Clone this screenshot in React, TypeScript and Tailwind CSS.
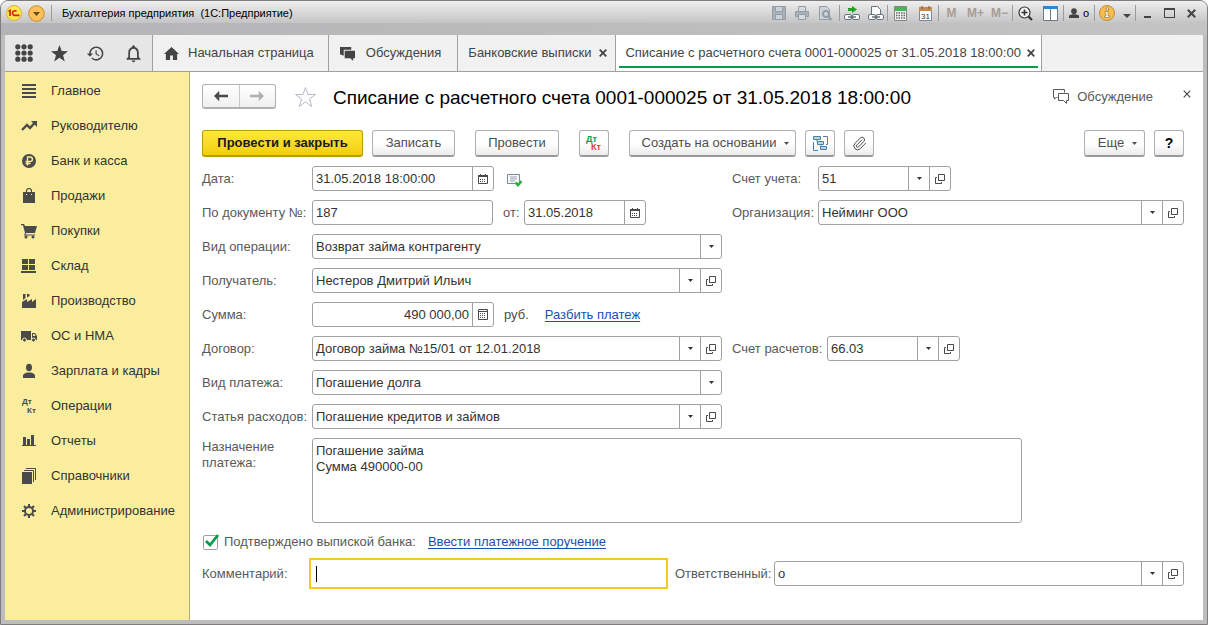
import { useId, useState } from 'react'
import type { ReactNode } from 'react'
import { Paperclip } from 'lucide-react'
import { MdHistory, MdNotificationsNone } from 'react-icons/md'

const sections: { label: string; icon: ReactNode }[] = [
  { label: 'Главное', icon: <path d="M1 1h14v2H1zM1 5h14v2H1zM1 9h14v2H1zM1 13h14v2H1z" /> },
  {
    label: 'Руководителю',
    icon: (
      <>
        <path d="M1 12l5-5 3 3 4.5-5" fill="none" stroke="currentColor" strokeWidth="2.4" />
        <path d="M10 3h6v6z" />
      </>
    ),
  },
  {
    label: 'Банк и касса',
    icon: (
      <>
        <circle cx="8" cy="8" r="7" />
        <path d="M6.5 12.5V4h2.7a2.2 2.2 0 0 1 0 4.5H4.5M4.5 10.5h5" fill="none" stroke="#fbed9e" strokeWidth="1.4" />
      </>
    ),
  },
  {
    label: 'Продажи',
    icon: (
      <>
        <path d="M2 4h3v3h1V4h4v3h1V4h3v11H2z" />
        <path d="M5.5 6V3a2.5 2.5 0 0 1 5 0v3" fill="none" stroke="currentColor" strokeWidth="1.2" />
      </>
    ),
  },
  {
    label: 'Покупки',
    icon: (
      <>
        <path d="M0 1h3l1 2h12l-2 7H5l-.5 1.500H14v1H3l1-2.500L2 2.200H0z" />
        <circle cx="5" cy="14" r="1.5" />
        <circle cx="12" cy="14" r="1.5" />
      </>
    ),
  },
  { label: 'Склад', icon: <path d="M1 1h6v5H1zM8 1h6v5H8zM1 7h6v5H1zM8 7h6v5H8zM0 13h15v2H0z" /> },
  { label: 'Производство', icon: <path d="M1 15V9l5-3v3l5-3v3l4-3v9zM2 1h2.500v4L2 7zM6 1h2.500v2L6 4.500z" /> },
  {
    label: 'ОС и НМА',
    icon: (
      <>
        <path d="M0 3h10v9H0zM11 5h3l2 3v4h-5z" />
        <path d="M12 6h1.500l1.200 2H12z" fill="#fbed9e" />
        <circle cx="3.5" cy="12" r="2" stroke="#fbed9e" />
        <circle cx="12.5" cy="12" r="2" stroke="#fbed9e" />
      </>
    ),
  },
  {
    label: 'Зарплата и кадры',
    icon: (
      <>
        <ellipse cx="8" cy="4.5" rx="3" ry="3.7" />
        <path d="M2 15v-2.500C2 11 4 10 6 9.500h4c2 .5 4 1.500 4 3V15z" />
      </>
    ),
  },
  {
    label: 'Операции',
    icon: (
      <>
        <text x="1" y="6" fontSize="8" fontWeight="bold">Дт</text>
        <text x="6" y="15" fontSize="8" fontWeight="bold">Кт</text>
      </>
    ),
  },
  { label: 'Отчеты', icon: <path d="M2 4h3v9H2zM6 6h3v7H6zM10 2h3v11h-3zM1 12h14v1H1z" /> },
  {
    label: 'Справочники',
    icon: (
      <>
        <path d="M1 4h10v12H1z" />
        <path d="M3 2.500h9.500V14M5 .5h9.500V12" fill="none" stroke="currentColor" />
      </>
    ),
  },
  {
    label: 'Администрирование',
    icon: (
      <>
        <circle cx="8" cy="8" r="4" fill="none" stroke="currentColor" strokeWidth="2" />
        <path
          d="M8 1v3M8 12v3M1 8h3M12 8h3M3 3l2.200 2.200M10.800 10.800L13 13M13 3l-2.200 2.200M5.200 10.800L3 13"
          stroke="currentColor"
          strokeWidth="2"
        />
      </>
    ),
  },
]

function Svg({ size = 16, className = '', children }: { size?: number; className?: string; children: ReactNode }) {
  return (
    <svg width={size} height={size} viewBox="0 0 16 16" fill="currentColor" className={`shrink-0 ${className}`} aria-hidden="true">
      {children}
    </svg>
  )
}

function Caret() {
  return (
    <svg width="5" height="3" viewBox="0 0 5 3" fill="currentColor" className="shrink-0" aria-hidden="true">
      <path d="M0 0h5L2.500 3z" />
    </svg>
  )
}

function Cross({ size = 8, width = 1.8 }: { size?: number; width?: number }) {
  return (
    <svg width={size} height={size} viewBox="0 0 8 8" className="shrink-0" aria-hidden="true">
      <path d="M.7.7l6.600 6.600M7.300.7L.7 7.300" stroke="currentColor" strokeWidth={width} />
    </svg>
  )
}

function Calendar() {
  return (
    <svg width="10" height="10" viewBox="0 0 10 10" aria-hidden="true">
      <path d="M.5 1.500h9v8h-9z" fill="none" stroke="#4a4a4a" />
      <path d="M0 1h10v2H0zM2 0h1v1H2zM7 0h1v1H7z" fill="#4a4a4a" />
      <path d="M2 5.500h6M2 7.500h6" stroke="#4a4a4a" strokeDasharray="1 1" />
    </svg>
  )
}

function Calculator() {
  return (
    <svg width="10" height="11" viewBox="0 0 10 11" aria-hidden="true">
      <path d="M.5.5h9v10h-9zM.5 2.500h9" fill="none" stroke="#4a4a4a" />
      <path d="M2 4.500h6M2 6.500h6M2 8.500h6" stroke="#4a4a4a" strokeDasharray="1 1" />
    </svg>
  )
}

function OpenIcon() {
  return (
    <svg width="10" height="10" viewBox="0 0 10 10" fill="none" stroke="#4a4a4a" aria-hidden="true">
      <path d="M3.500.5h6v6h-6zM2 3.500H.5v6h6V8" />
    </svg>
  )
}

type FieldProps = {
  label: string
  value: string
  labelClass?: string
  boxClass?: string
  inputClass?: string
  kind?: 'text' | 'select'
  action?: 'calendar' | 'calculator' | 'open'
}

const actions = {
  calendar: { title: 'Выбрать дату', icon: <Calendar /> },
  calculator: { title: 'Калькулятор', icon: <Calculator /> },
  open: { title: 'Открыть', icon: <OpenIcon /> },
}

function Field({ label, value, labelClass = 'w-[110px]', boxClass = 'flex-1', inputClass = '', kind = 'text', action }: FieldProps) {
  const id = useId()
  const [current, setCurrent] = useState(value)
  const button = action && actions[action]

  return (
    <>
      <label htmlFor={id} className={`shrink-0 whitespace-nowrap text-[#595959] ${labelClass}`}>
        {label}
      </label>
      <div className={`flex h-[25px] min-w-0 overflow-hidden rounded-[3px] border border-[#a0a0a0] bg-white ${boxClass}`}>
        {kind === 'select' ? (
          <div className="grid min-w-0 flex-1">
            <select
              id={id}
              value={current}
              onChange={(e) => setCurrent(e.target.value)}
              className="col-start-1 row-start-1 w-full appearance-none pr-6 pl-[3px] outline-none"
            >
              <option>{value}</option>
            </select>
            <span className="pointer-events-none col-start-1 row-start-1 flex w-[21px] items-center justify-center justify-self-end border-l border-[#a0a0a0]">
              <Caret />
            </span>
          </div>
        ) : (
          <input
            id={id}
            value={current}
            onChange={(e) => setCurrent(e.target.value)}
            className={`w-full min-w-0 flex-1 px-[3px] outline-none ${inputClass}`}
          />
        )}
        {button && (
          <button type="button" title={button.title} className="flex w-[21px] shrink-0 items-center justify-center border-l border-[#a0a0a0]">
            {button.icon}
          </button>
        )}
      </div>
    </>
  )
}

function ToolButton({ title, className = '', children }: { title?: string; className?: string; children: ReactNode }) {
  return (
    <button
      type="button"
      title={title}
      className={`flex h-[27px] shrink-0 items-center justify-center rounded-[3px] border border-b-2 border-[#b0b0b0] border-b-[#9a9a9a] bg-linear-to-b from-white from-50% to-[#ececec] whitespace-nowrap ${className}`}
    >
      {children}
    </button>
  )
}

function Divider() {
  return <span className="h-4 w-px shrink-0 bg-[#9c9c9c]" />
}

function SysButton({ title, className = 'w-[23px]', children }: { title: string; className?: string; children: ReactNode }) {
  return (
    <button type="button" title={title} className={`flex h-5 shrink-0 items-center justify-center ${className}`}>
      {children}
    </button>
  )
}

function TitleBar() {
  return (
    <header className="-mx-1 bg-linear-to-r from-[#b4b4b6] to-[#c4c4c5]">
      <div className="flex h-[22px] items-center bg-linear-to-b from-[#efefef] to-[#c4c4c6] px-1 pt-0.5">
        <button type="button" title="Главное меню" className="ml-px flex">
          <svg width="16" height="16" viewBox="0 0 16 16" aria-hidden="true">
            <circle cx="8" cy="8" r="7.5" fill="#ffe84d" stroke="#d9b43a" />
            <path d="M2.500 6.500l1.500-1V11M10.500 6.500A2.300 2.300 0 1 0 8.300 10.300H13.500" fill="none" stroke="#d8201a" strokeWidth="1.7" />
          </svg>
        </button>
        <button type="button" title="Меню" className="ml-1.5 flex">
          <svg width="17" height="17" viewBox="0 0 17 17" aria-hidden="true">
            <circle cx="8.5" cy="8.5" r="7.8" fill="#fbc156" stroke="#c98b2c" />
            <path d="M5 7h7l-3.500 4z" fill="#6b4a17" />
          </svg>
        </button>
        <span className="ml-1.5 flex">
          <Divider />
        </span>
        <span className="ml-2.5 text-[11px] whitespace-pre text-black">Бухгалтерия предприятия  (1С:Предприятие)</span>
        <div className="ml-auto flex items-center text-[#444]">
          <SysButton title="Сохранить">
            <svg width="14" height="14" viewBox="0 0 14 14" fill="none" stroke="#929da8" aria-hidden="true">
              <path d="M.5.5h13v13H.5z" fill="#a9b2ba" />
              <path d="M3.500.5h7v5h-7zM3.500 8.500h7v5h-7z" fill="#cdd2d6" />
            </svg>
          </SysButton>
          <SysButton title="Печать">
            <svg width="14" height="14" viewBox="0 0 14 14" fill="none" stroke="#929da8" aria-hidden="true">
              <path d="M3.500 5V.5h7V5" fill="#d8dbde" />
              <path d="M.5 5.500h13v5H.5z" fill="#a9b2ba" />
              <path d="M3.500 8.500h7v5h-7z" fill="#d8dbde" />
            </svg>
          </SysButton>
          <SysButton title="Предварительный просмотр">
            <svg width="14" height="15" viewBox="0 0 14 15" fill="none" stroke="#929da8" aria-hidden="true">
              <path d="M1.500.5h7l3 3v10h-10z" fill="#d0d4d8" />
              <circle cx="8" cy="8" r="3" strokeWidth="1.8" />
              <path d="M10 10l3.500 4" strokeWidth="2" />
            </svg>
          </SysButton>
          <span className="ml-[3px] flex">
            <Divider />
          </span>
          <SysButton title="Получить ссылку" className="w-6">
            <svg width="16" height="15" viewBox="0 0 16 15" fill="none" aria-hidden="true">
              <path d="M4 2h4V0l5 3.500L8 7V5H4z" fill="#1fa51f" />
              <rect x=".5" y="8.5" width="7" height="5" rx="1.5" fill="#fff" stroke="#66727e" />
              <rect x="8.5" y="8.5" width="7" height="5" rx="1.5" fill="#fff" stroke="#66727e" />
              <path d="M4 11h8" stroke="#66727e" strokeWidth="1.5" />
            </svg>
          </SysButton>
          <SysButton title="Перейти по ссылке">
            <svg width="16" height="15" viewBox="0 0 16 15" fill="none" aria-hidden="true">
              <path d="M3.500 8V.5h6l3 3V8" fill="#fff" stroke="#66727e" />
              <rect x=".5" y="8.5" width="7" height="5" rx="1.5" fill="#fff" stroke="#66727e" />
              <rect x="8.5" y="8.5" width="7" height="5" rx="1.5" fill="#fff" stroke="#66727e" />
              <path d="M4 11h8" stroke="#66727e" strokeWidth="1.5" />
            </svg>
          </SysButton>
          <Divider />
          <SysButton title="Калькулятор" className="w-[25px]">
            <svg width="13" height="15" viewBox="0 0 13 15" aria-hidden="true">
              <path d="M.5.5h12v14H.5z" fill="#f4f4f4" stroke="#7d8a7d" />
              <path d="M1 1h11v4H1z" fill="#45b655" />
              <path d="M2 7h9M2 9.500h9M2 12h9" stroke="#666" strokeWidth="1.5" strokeDasharray="1.5 1" />
            </svg>
          </SysButton>
          <SysButton title="Календарь" className="w-[25px]">
            <svg width="13" height="15" viewBox="0 0 13 15" aria-hidden="true">
              <path d="M.5 1.500h12v13H.5z" fill="#fff" stroke="#7f8790" />
              <path d="M0 1h13v4H0z" fill="#c98a52" />
              <path d="M3 0v3M10 0v3" stroke="#7a5230" />
              <text x="2" y="13" fontSize="8" fill="#333">31</text>
            </svg>
          </SysButton>
          <Divider />
          <SysButton title="Копировать в память" className="w-[25px]">
            <span className="text-xs font-bold text-[#a89c93]">M</span>
          </SysButton>
          <SysButton title="Прибавить к памяти">
            <span className="text-xs font-bold text-[#a89c93]">M+</span>
          </SysButton>
          <SysButton title="Вычесть из памяти" className="w-[25px]">
            <span className="text-xs font-bold text-[#a89c93]">M−</span>
          </SysButton>
          <Divider />
          <SysButton title="Масштаб" className="w-[25px]">
            <svg width="15" height="15" viewBox="0 0 15 15" fill="none" stroke="#333" aria-hidden="true">
              <circle cx="6.5" cy="6.5" r="5.5" fill="#f5f5f5" strokeWidth="1.2" />
              <path d="M3.500 6.500h6M6.500 3.500v6" strokeWidth="1.6" />
              <path d="M10.500 10.500l3.500 3.500" strokeWidth="2.2" />
            </svg>
          </SysButton>
          <SysButton title="Панели" className="w-[25px]">
            <svg width="15" height="15" viewBox="0 0 15 15" aria-hidden="true">
              <path d="M.5.5h14v14H.5z" fill="#fff" stroke="#6d7a86" />
              <path d="M0 0h15v3H0z" fill="#2f86d2" />
              <path d="M7.500 3v11" stroke="#6d7a86" />
            </svg>
          </SysButton>
          <Divider />
          <SysButton title="Пользователь" className="w-[30px] gap-1">
            <Svg size={10}>
              <circle cx="8" cy="5" r="4.5" />
              <path d="M0 16v-4l5-2h6l5 2v4z" />
            </Svg>
            <span className="text-[11px] text-black">о</span>
          </SysButton>
          <Divider />
          <SysButton title="Информация" className="w-6">
            <svg width="16" height="16" viewBox="0 0 16 16" aria-hidden="true">
              <circle cx="8" cy="8" r="7.5" fill="#f6bd4f" stroke="#c48a33" />
              <path d="M7 3h2.500v2H7zM6 6.500h3V11h1.500v1.500h-5V11H7V8H6z" fill="#fff" stroke="#7b5a22" strokeWidth=".5" />
            </svg>
          </SysButton>
          <SysButton title="Параметры" className="w-4 pt-1.5">
            <svg width="8" height="4" viewBox="0 0 8 4" aria-hidden="true">
              <path d="M0 0h8L4 4z" fill="#444" />
            </svg>
          </SysButton>
          <Divider />
          <SysButton title="Свернуть" className="w-[22px] pt-2">
            <span className="h-0.5 w-[7px] bg-[#444]" />
          </SysButton>
          <SysButton title="Развернуть" className="w-[22px]">
            <span className="h-2.5 w-[11px] border border-t-2 border-[#444]" />
          </SysButton>
          <SysButton title="Закрыть" className="mr-px w-[22px]">
            <Cross size={9} />
          </SysButton>
        </div>
      </div>
      <div className="h-3" />
    </header>
  )
}

function TabBar() {
  const tab = 'flex h-full items-center border-r border-[#a0a0a0] whitespace-nowrap'
  return (
    <div className="flex h-[37px] items-center border-b border-[#a0a0a0] bg-[#f1f1f1] text-[#444]">
      <div className="flex h-full w-[148px] shrink-0 items-center justify-between border-r border-[#a0a0a0] bg-[#e6e6e6] pr-2 pl-[10px]">
        <button type="button" title="Меню функций">
          <Svg size={18}>
            <circle cx="2.5" cy="2.5" r="2.3" />
            <circle cx="8" cy="2.5" r="2.3" />
            <circle cx="13.5" cy="2.5" r="2.3" />
            <circle cx="2.5" cy="8" r="2.3" />
            <circle cx="8" cy="8" r="2.3" />
            <circle cx="13.5" cy="8" r="2.3" />
            <circle cx="2.5" cy="13.5" r="2.3" />
            <circle cx="8" cy="13.5" r="2.3" />
            <circle cx="13.5" cy="13.5" r="2.3" />
          </Svg>
        </button>
        <button type="button" title="Избранное">
          <Svg size={17}>
            <path d="M8 0l2.100 5.700 5.900.2-4.700 3.700L13 15.500 8 12l-5 3.500 1.700-5.900L0 5.900l5.900-.2z" />
          </Svg>
        </button>
        <button type="button" title="История">
          <MdHistory size={19} />
        </button>
        <button type="button" title="Оповещения">
          <MdNotificationsNone size={21} />
        </button>
      </div>
      <a href="#home" className={`${tab} gap-[9px] pr-3.5 pl-[11px]`}>
        <Svg size={15}>
          <path d="M8 1l8 7.500h-2V15H9.500v-5h-3v5H2V8.500H0z" />
        </Svg>
        Начальная страница
      </a>
      <a href="#talks" className={`${tab} gap-[11px] pr-4 pl-[11px]`}>
        <Svg size={15}>
          <path d="M0 1h12v3H4v6H3l-2-1H0zM5 5h11v8h-2v3l-3-3H5z" />
        </Svg>
        Обсуждения
      </a>
      <div className={`${tab} gap-2 pr-2 pl-[10px]`}>
        <a href="#statements">Банковские выписки</a>
        <button type="button" title="Закрыть вкладку">
          <Cross />
        </button>
      </div>
      <div className={`${tab} bg-white px-[3px]`}>
        <div className="flex h-[33px] items-center gap-1.5 self-start border-b-2 border-[#0a9a4b] pt-1 pr-[3px] pl-[6px]">
          <a href="#payment">Списание с расчетного счета 0001-000025 от 31.05.2018 18:00:00</a>
          <button type="button" title="Закрыть вкладку">
            <Cross />
          </button>
        </div>
      </div>
    </div>
  )
}

function Sidebar() {
  return (
    <nav className="w-[185px] shrink-0 border-r border-[#b5ac74] bg-[#fbed9e] pt-px">
      {sections.map((s) => (
        <a key={s.label} href="#section" className="flex h-[35px] items-center gap-[14px] pl-4 whitespace-nowrap text-[#333]">
          <Svg className="text-[#4a4a4a]">{s.icon}</Svg>
          {s.label}
        </a>
      ))}
    </nav>
  )
}

function FormHeader() {
  return (
    <div className="flex h-[25px] items-center pr-3">
      <div className="flex h-[25px] w-[74px] shrink-0 rounded-[3px] border border-b-2 border-[#b0b0b0] bg-linear-to-b from-white to-[#f0f0f0]">
        <button type="button" title="Назад" className="flex flex-1 items-center justify-center border-r border-[#c8c8c8] text-[#4a4a4a]">
          <Svg size={14}>
            <path d="M0 8l6-6v4.500h10v3H6V14z" />
          </Svg>
        </button>
        <button type="button" title="Вперед" className="flex flex-1 items-center justify-center text-[#b0b0b0]">
          <Svg size={14}>
            <path d="M16 8l-6-6v4.500H0v3h10V14z" />
          </Svg>
        </button>
      </div>
      <button type="button" title="Добавить в избранное" className="ml-[18px] shrink-0 text-[#b4bac2]">
        <svg width="23" height="22" viewBox="0 0 23 22" fill="none" stroke="currentColor" aria-hidden="true">
          <path d="M11.500 1.500l2.500 7h7.500l-6 4.500 2.300 7.500-6.300-4.600-6.300 4.600L7.500 13l-6-4.500H9z" />
        </svg>
      </button>
      <h1 className="ml-4 pt-[3px] text-[19px] whitespace-nowrap text-black">
        Списание с расчетного счета 0001-000025 от 31.05.2018 18:00:00
      </h1>
      <button type="button" className="ml-auto flex items-center gap-2 text-[#595959]">
        <svg width="16" height="15" viewBox="0 0 16 15" fill="none" stroke="currentColor" aria-hidden="true">
          <path d="M4.500 8.500H3.500l-2 1.500V8.500h-1v-8h11v3M5.500 4.500h10v7h-2v3l-3-3h-5z" />
        </svg>
        Обсуждение
      </button>
      <button type="button" title="Закрыть" className="mb-1.5 ml-[30px] text-[#4a4a4a]">
        <Cross width={1.2} />
      </button>
    </div>
  )
}

function Toolbar() {
  return (
    <div className="mt-[21px] flex pr-[19px] text-[#4d4d4d]">
      <button
        type="button"
        className="flex h-[27px] w-[161px] shrink-0 items-center justify-center rounded-[3px] border border-b-2 border-[#b59d00] bg-linear-to-b from-[#ffe93a] to-[#f2cf00] font-bold whitespace-nowrap text-[#1a1a1a]"
      >
        Провести и закрыть
      </button>
      <ToolButton className="ml-[9px] w-[83px]">Записать</ToolButton>
      <ToolButton className="ml-5 w-[84px]">Провести</ToolButton>
      <ToolButton title="Движения документа" className="ml-5 w-[30px]">
        <svg width="18" height="16" viewBox="0 0 18 16" fontSize="9" fontWeight="bold" aria-hidden="true">
          <text x="1" y="7" fill="#0a9a4b">Дт</text>
          <text x="6" y="15" fill="#e0403c">Кт</text>
        </svg>
      </ToolButton>
      <ToolButton className="ml-5 w-[167px] gap-2 pl-1.5">
        Создать на основании
        <Caret />
      </ToolButton>
      <ToolButton title="Структура подчиненности" className="ml-[9px] w-[30px]">
        <svg width="15" height="15" viewBox="0 0 15 15" fill="#b9d3e8" stroke="#4a80ad" aria-hidden="true">
          <path d="M.5.5h7v3h-7zM4.500 5.500h6v3h-6zM7.500 10.500h6v3h-6z" />
          <path d="M10 .5h4.500v8H13M.5 6v8.500H5M4 4v2M8 9v2" fill="none" />
        </svg>
      </ToolButton>
      <ToolButton title="Присоединенные файлы" className="ml-[9px] w-[30px]">
        <Paperclip size={15} strokeWidth={1.6} />
      </ToolButton>
      <ToolButton className="ml-auto w-[61px] gap-2 pl-1.5">
        Еще
        <Caret />
      </ToolButton>
      <ToolButton title="Справка" className="ml-[9px] w-[30px]">
        <span className="text-sm font-bold text-black">?</span>
      </ToolButton>
    </div>
  )
}

function Row({ left, right }: { left: ReactNode; right?: ReactNode }) {
  return (
    <div className="flex gap-2.5">
      <div className="flex w-[520px] shrink-0 items-center">{left}</div>
      {right && <div className="flex min-w-0 flex-1 items-center">{right}</div>}
    </div>
  )
}

function PaymentForm() {
  const [purpose, setPurpose] = useState('Погашение займа\nСумма 490000-00')
  const [confirmed, setConfirmed] = useState(true)
  const [comment, setComment] = useState('')

  return (
    <form className="mt-[9px] flex flex-col gap-[9px] pr-[19px]">
      <Row
        left={
          <>
            <Field label="Дата:" value="31.05.2018 18:00:00" boxClass="w-[182px]" action="calendar" />
            <svg width="15" height="13" viewBox="0 0 15 13" className="mt-1 ml-[13px]" fill="none" aria-hidden="true">
              <path d="M.5.5h12v9H.5z" fill="#f6f8fa" stroke="#7d8997" />
              <path d="M3 3h7M3 5h7M3 7h5" stroke="#98a3ae" />
              <path d="M8.500 8.500l2.500 2.500 3.500-4" stroke="#2cb23c" strokeWidth="2.6" />
            </svg>
          </>
        }
        right={<Field label="Счет учета:" value="51" labelClass="w-[86px]" boxClass="w-[133px]" kind="select" action="open" />}
      />
      <Row
        left={
          <>
            <Field label="По документу №:" value="187" boxClass="w-[181px]" />
            <Field label="от:" value="31.05.2018" labelClass="ml-2.5 w-[21px]" boxClass="w-[122px]" action="calendar" />
          </>
        }
        right={<Field label="Организация:" value="Нейминг ООО" labelClass="w-[86px]" kind="select" action="open" />}
      />
      <Row left={<Field label="Вид операции:" value="Возврат займа контрагенту" kind="select" />} />
      <Row left={<Field label="Получатель:" value="Нестеров Дмитрий Ильич" kind="select" action="open" />} />
      <Row
        left={
          <>
            <Field label="Сумма:" value="490 000,00" boxClass="w-[182px]" inputClass="text-right" action="calculator" />
            <span className="ml-2.5 text-[#4d4d4d]">руб.</span>
            <a href="#split" className="ml-4 text-[#1a4fb4] underline underline-offset-2">
              Разбить платеж
            </a>
          </>
        }
      />
      <Row
        left={<Field label="Договор:" value="Договор займа №15/01 от 12.01.2018" kind="select" action="open" />}
        right={<Field label="Счет расчетов:" value="66.03" labelClass="w-[95px]" boxClass="w-[133px]" kind="select" action="open" />}
      />
      <Row left={<Field label="Вид платежа:" value="Погашение долга" kind="select" />} />
      <Row left={<Field label="Статья расходов:" value="Погашение кредитов и займов" kind="select" action="open" />} />
      <div className="flex">
        <label htmlFor="purpose" className="w-[110px] shrink-0 pt-px leading-4 text-[#595959]">
          Назначение
          <br />
          платежа:
        </label>
        <textarea
          id="purpose"
          value={purpose}
          onChange={(e) => setPurpose(e.target.value)}
          className="h-[85px] w-[710px] resize-none rounded-[3px] border border-[#a0a0a0] px-[3px] py-1 leading-4 outline-none"
        />
      </div>
      <div className="flex h-5 items-center">
        <label className="flex items-center gap-1.5 text-[#595959]">
          <span className="ml-px grid">
            <input
              type="checkbox"
              checked={confirmed}
              onChange={(e) => setConfirmed(e.target.checked)}
              className="col-start-1 row-start-1 size-[15px] appearance-none rounded-xs border border-[#a0a0a0] bg-white"
            />
            {confirmed && (
              <svg width="15" height="15" viewBox="0 0 15 15" className="pointer-events-none col-start-1 row-start-1 overflow-visible" aria-hidden="true">
                <path d="M3 6l4 4L15 0" fill="none" stroke="#0a9a4b" strokeWidth="2.8" />
              </svg>
            )}
          </span>
          Подтверждено выпиской банка:
        </label>
        <a href="#order" className="ml-3 text-[#1a4fb4] underline underline-offset-2">
          Ввести платежное поручение
        </a>
      </div>
      <div className="-mt-[3px] flex items-center">
        <label htmlFor="comment" className="w-[107px] shrink-0 text-[#595959]">
          Комментарий:
        </label>
        <div className="flex h-[31px] w-[359px] items-center border-2 border-[#f9c81f] pl-[5px]">
          <span className="h-4 w-px bg-black" />
          <input
            id="comment"
            value={comment}
            onChange={(e) => setComment(e.target.value)}
            className="h-full min-w-0 flex-1 caret-transparent outline-none"
          />
        </div>
        <Field label="Ответственный:" value="о" labelClass="ml-[7px] w-[99px]" kind="select" action="open" />
      </div>
    </form>
  )
}

export default function App() {
  return (
    <div className="min-h-screen bg-white font-['Liberation_Sans',Arial,sans-serif] text-[13px] text-[#333]">
      <div className="flex min-h-screen flex-col overflow-hidden rounded-t-lg border border-[#7e7c7d] bg-[#bdbdbf] px-1 pb-1">
        <TitleBar />
        <TabBar />
        <div className="flex flex-1">
          <Sidebar />
          <main className="min-w-0 flex-1 bg-white pt-3 pl-3">
            <FormHeader />
            <Toolbar />
            <PaymentForm />
          </main>
        </div>
      </div>
    </div>
  )
}
